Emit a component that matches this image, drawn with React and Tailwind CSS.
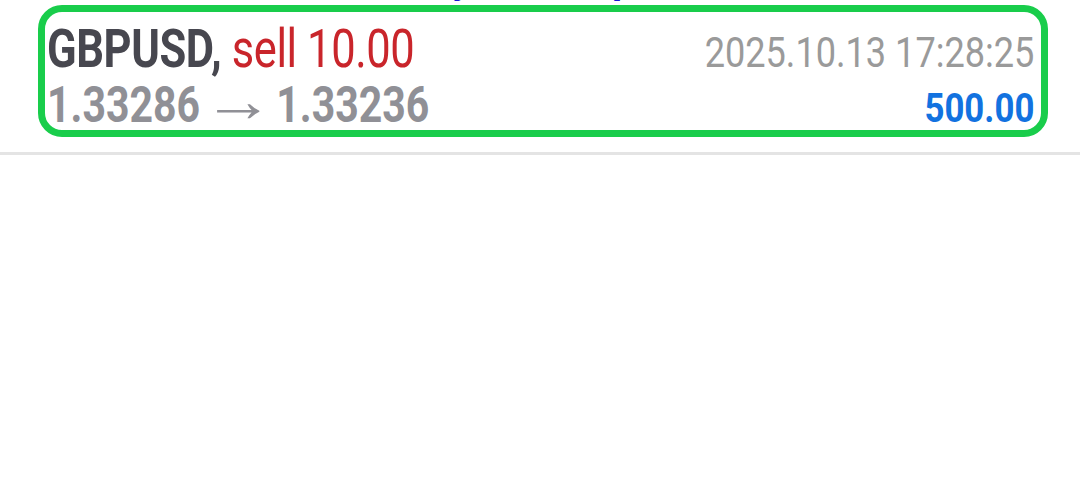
export default function App() {
  return (
    <div className="relative w-[1080px] h-[480px] bg-white overflow-hidden font-['Roboto',sans-serif]">
      <div className="absolute left-0 top-0 w-full h-[6px] overflow-hidden z-10">
        <span className="absolute left-[452px] top-[-44px] text-[40px] leading-[48px] font-bold text-[#1a12d6]">y</span>
        <span className="absolute left-[612px] top-[-44px] text-[40px] leading-[48px] font-bold text-[#1a12d6]">p</span>
      </div>
      <div className="ml-[38px] mt-[5px] w-[1010px] h-[132px] border-[7px] border-[#19cd4b] rounded-[24px] pt-[8px] pl-[2px] pr-[7px] flex flex-col gap-[2px]">
        <div className="flex items-baseline justify-between h-[58px]">
          <span className="inline-block origin-left scale-x-[0.82] whitespace-nowrap text-[53px] leading-[58px] tracking-[-0.5px]">
            <span className="font-bold text-[#47474f]">GBPUSD,</span>
            <span className="text-[#c9252b]"> sell 10.00</span>
          </span>
          <span className="inline-block origin-right scale-x-[0.86] whitespace-nowrap text-[42px] leading-[58px] text-[#9a9a9a]">
            2025.10.13 17:28:25
          </span>
        </div>
        <div className="flex items-baseline justify-between h-[50px]">
          <span className="inline-block origin-left scale-x-[0.82] whitespace-nowrap text-[50px] leading-[50px] font-bold text-[#909096]">
            1.33286
            <span className="inline-block w-[93px] text-center font-['Liberation_Sans',sans-serif] font-normal text-[60px] leading-[0] scale-x-[1.45] -translate-y-[1px]">→</span>
            1.33236
          </span>
          <span className="inline-block origin-right scale-x-[0.87] whitespace-nowrap text-[40px] leading-[50px] font-bold text-[#1272e0]">
            500.00
          </span>
        </div>
      </div>
      <div className="mt-[15px] h-[3px] bg-[#e4e4e4]" />
    </div>
  );
}
